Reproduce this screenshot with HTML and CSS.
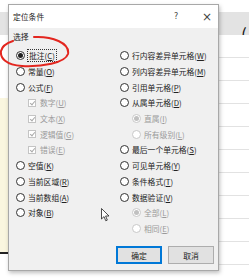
FILE: index.html
```html
<!DOCTYPE html>
<html lang="zh">

<head>
    <title>定位条件</title>
    <meta charset="utf-8">
    <link rel="stylesheet" href="styles.css">
</head>

<body>
    <!-- spreadsheet behind the dialog -->
    <div class="sheet">
        <div class="sheet-bar"><span class="paren">(</span></div>
        <div class="sheet-left"></div>
        <div class="sheet-line"></div>
        <div class="sheet-grid"></div>
    </div>

    <div class="dialog">
        <div class="titlebar">
            <span class="title">定位条件</span>
            <span class="help">?</span>
            <span class="close">×</span>
        </div>

        <div class="body">
            <div class="group-label">选择</div>
            <div class="options">
                <div class="col">
                    <div class="row"><span class="radio on"></span><span class="focus">批注(<u>C</u>)</span></div>
                    <div class="row"><span class="radio"></span>常量(<u>O</u>)</div>
                    <div class="row"><span class="radio"></span>公式(<u>F</u>)</div>
                    <div class="row sub off"><span class="check"></span>数字(<u>U</u>)</div>
                    <div class="row sub off"><span class="check"></span>文本(<u>X</u>)</div>
                    <div class="row sub off"><span class="check"></span>逻辑值(<u>G</u>)</div>
                    <div class="row sub off"><span class="check"></span>错误(<u>E</u>)</div>
                    <div class="row"><span class="radio"></span>空值(<u>K</u>)</div>
                    <div class="row"><span class="radio"></span>当前区域(<u>R</u>)</div>
                    <div class="row"><span class="radio"></span>当前数组(<u>A</u>)</div>
                    <div class="row"><span class="radio"></span>对象(<u>B</u>)</div>
                </div>
                <div class="col">
                    <div class="row"><span class="radio"></span>行内容差异单元格(<u>W</u>)</div>
                    <div class="row"><span class="radio"></span>列内容差异单元格(<u>M</u>)</div>
                    <div class="row"><span class="radio"></span>引用单元格(<u>P</u>)</div>
                    <div class="row"><span class="radio"></span>从属单元格(<u>D</u>)</div>
                    <div class="row sub off"><span class="radio on"></span>直属(<u>I</u>)</div>
                    <div class="row sub off"><span class="radio"></span>所有级别(<u>L</u>)</div>
                    <div class="row"><span class="radio"></span>最后一个单元格(<u>S</u>)</div>
                    <div class="row"><span class="radio"></span>可见单元格(<u>Y</u>)</div>
                    <div class="row"><span class="radio"></span>条件格式(<u>T</u>)</div>
                    <div class="row"><span class="radio"></span>数据验证(<u>V</u>)</div>
                    <div class="row sub off"><span class="radio on"></span>全部(<u>L</u>)</div>
                    <div class="row sub off"><span class="radio"></span>相同(<u>E</u>)</div>
                </div>
            </div>

            <div class="buttons">
                <button class="btn default">确定</button>
                <button class="btn">取消</button>
            </div>
        </div>
    </div>

    <!-- red pen mark around the first option -->
    <svg class="mark" width="80" height="80" viewBox="0 0 80 80">
        <path d="M34 37 C 52 36, 70 43, 68 54 C 65 63, 42 67, 22 66 C 6 65, 0 58, 1 51 C 2 46, 7 43, 13 41"
            fill="none" stroke="#e3261f" stroke-width="2" stroke-linecap="round" />
    </svg>

    <!-- mouse pointer -->
    <svg class="cursor" width="9" height="14" viewBox="0 0 9 14">
        <path d="M0.5 0.5 L0.5 11 L3 8.6 L4.8 12.8 L6.3 12.1 L4.6 8 L8 8 Z" fill="#fff" stroke="#222"
            stroke-width="0.8" />
    </svg>
</body>

</html>
```

FILE: styles.css
```css
* {
    box-sizing: border-box;
}

body {
    margin: 0;
    width: 249px;
    height: 279px;
    overflow: hidden;
    position: relative;
    background: #fff;
    font-family: "Noto Sans CJK SC", "Liberation Sans", sans-serif;
    font-size: 7.8px;
    color: #222;
}

/* Sheet in the background */
.sheet {
    position: absolute;
    inset: 0;
}

.sheet-bar {
    position: absolute;
    left: 0;
    right: 0;
    top: 12px;
    height: 23px;
    background: #e3e3e3;
}

.paren {
    position: absolute;
    left: 241px;
    top: 13px;
    font-size: 17px;
    line-height: 17px;
    color: #111;
}

.sheet-left {
    position: absolute;
    left: 0;
    top: 98px;
    width: 10px;
    height: 154px;
    background: #faf6df;
}

.sheet-line {
    position: absolute;
    left: 0;
    top: 252px;
    width: 12px;
    height: 2px;
    background: #222;
}

.sheet-grid {
    position: absolute;
    left: 219px;
    right: 0;
    top: 35px;
    bottom: 0;
    background: repeating-linear-gradient(to bottom, #fff 0, #fff 22px, #e2e2e2 22px, #e2e2e2 23px);
}

/* Dialog window */
.dialog {
    position: absolute;
    left: 8px;
    top: 4px;
    width: 211px;
    height: 267px;
    background: #f0f0f0;
    border: 1px solid #a8a8a8;
    box-shadow: 1px 2px 4px rgba(0, 0, 0, 0.25);
    display: flex;
    flex-direction: column;
}

.titlebar {
    height: 23px;
    background: #fff;
    display: flex;
    align-items: center;
    padding-left: 4px;
}

.title {
    flex: 1;
}

.help {
    width: 28px;
    font-family: "DejaVu Sans", sans-serif;
    font-size: 8px;
    color: #444;
}

.close {
    width: 16px;
    font-family: "DejaVu Sans", sans-serif;
    font-size: 12px;
    color: #444;
}

.body {
    flex: 1;
    padding: 3px 4px 6px 4px;
    display: flex;
    flex-direction: column;
}

.group-label {
    height: 12px;
    line-height: 12px;
}

.options {
    display: flex;
    padding-left: 3px;
    margin-top: 5px;
}

.col {
    display: flex;
    flex-direction: column;
}

.col:first-child {
    width: 104px;
}

.row {
    height: 15.7px;
    display: flex;
    align-items: center;
    white-space: nowrap;
}

.row.sub {
    padding-left: 12px;
}

.row.off {
    color: #9a9a9a;
}

u {
    text-decoration-thickness: 1px;
    text-underline-offset: 1px;
}

/* Radio buttons and check boxes */
.radio {
    width: 9px;
    height: 9px;
    border: 1px solid #333;
    border-radius: 50%;
    background: #fff;
    margin-right: 3px;
    display: flex;
    align-items: center;
    justify-content: center;
    flex-shrink: 0;
}

.radio.on::after {
    content: "";
    width: 5px;
    height: 5px;
    border-radius: 50%;
    background: #222;
}

.off .radio {
    border-color: #c8c8c8;
}

.off .radio.on::after {
    background: #c0c0c0;
}

.check {
    width: 8px;
    height: 8px;
    border: 1px solid #c4c4c4;
    background: #fff;
    margin-right: 4px;
    position: relative;
    flex-shrink: 0;
}

.check::after {
    content: "";
    position: absolute;
    left: 2px;
    top: 0;
    width: 2px;
    height: 4px;
    border: solid #aaa;
    border-width: 0 1px 1px 0;
    transform: rotate(40deg);
}

.focus {
    outline: 1px dotted #333;
    outline-offset: 0;
    padding: 0 1px;
    line-height: 11px;
}

/* Buttons */
.buttons {
    margin-top: auto;
    display: flex;
    justify-content: flex-end;
    gap: 6px;
}

.btn {
    width: 46px;
    height: 18px;
    background: #e1e1e1;
    border: 1px solid #adadad;
    font-family: inherit;
    font-size: 7.8px;
    color: #222;
    padding: 0;
}

.btn.default {
    border: 2px solid #0078d7;
}

/* Overlays */
.mark {
    position: absolute;
    left: 0;
    top: 0;
}

.cursor {
    position: absolute;
    left: 101px;
    top: 208px;
}
```
